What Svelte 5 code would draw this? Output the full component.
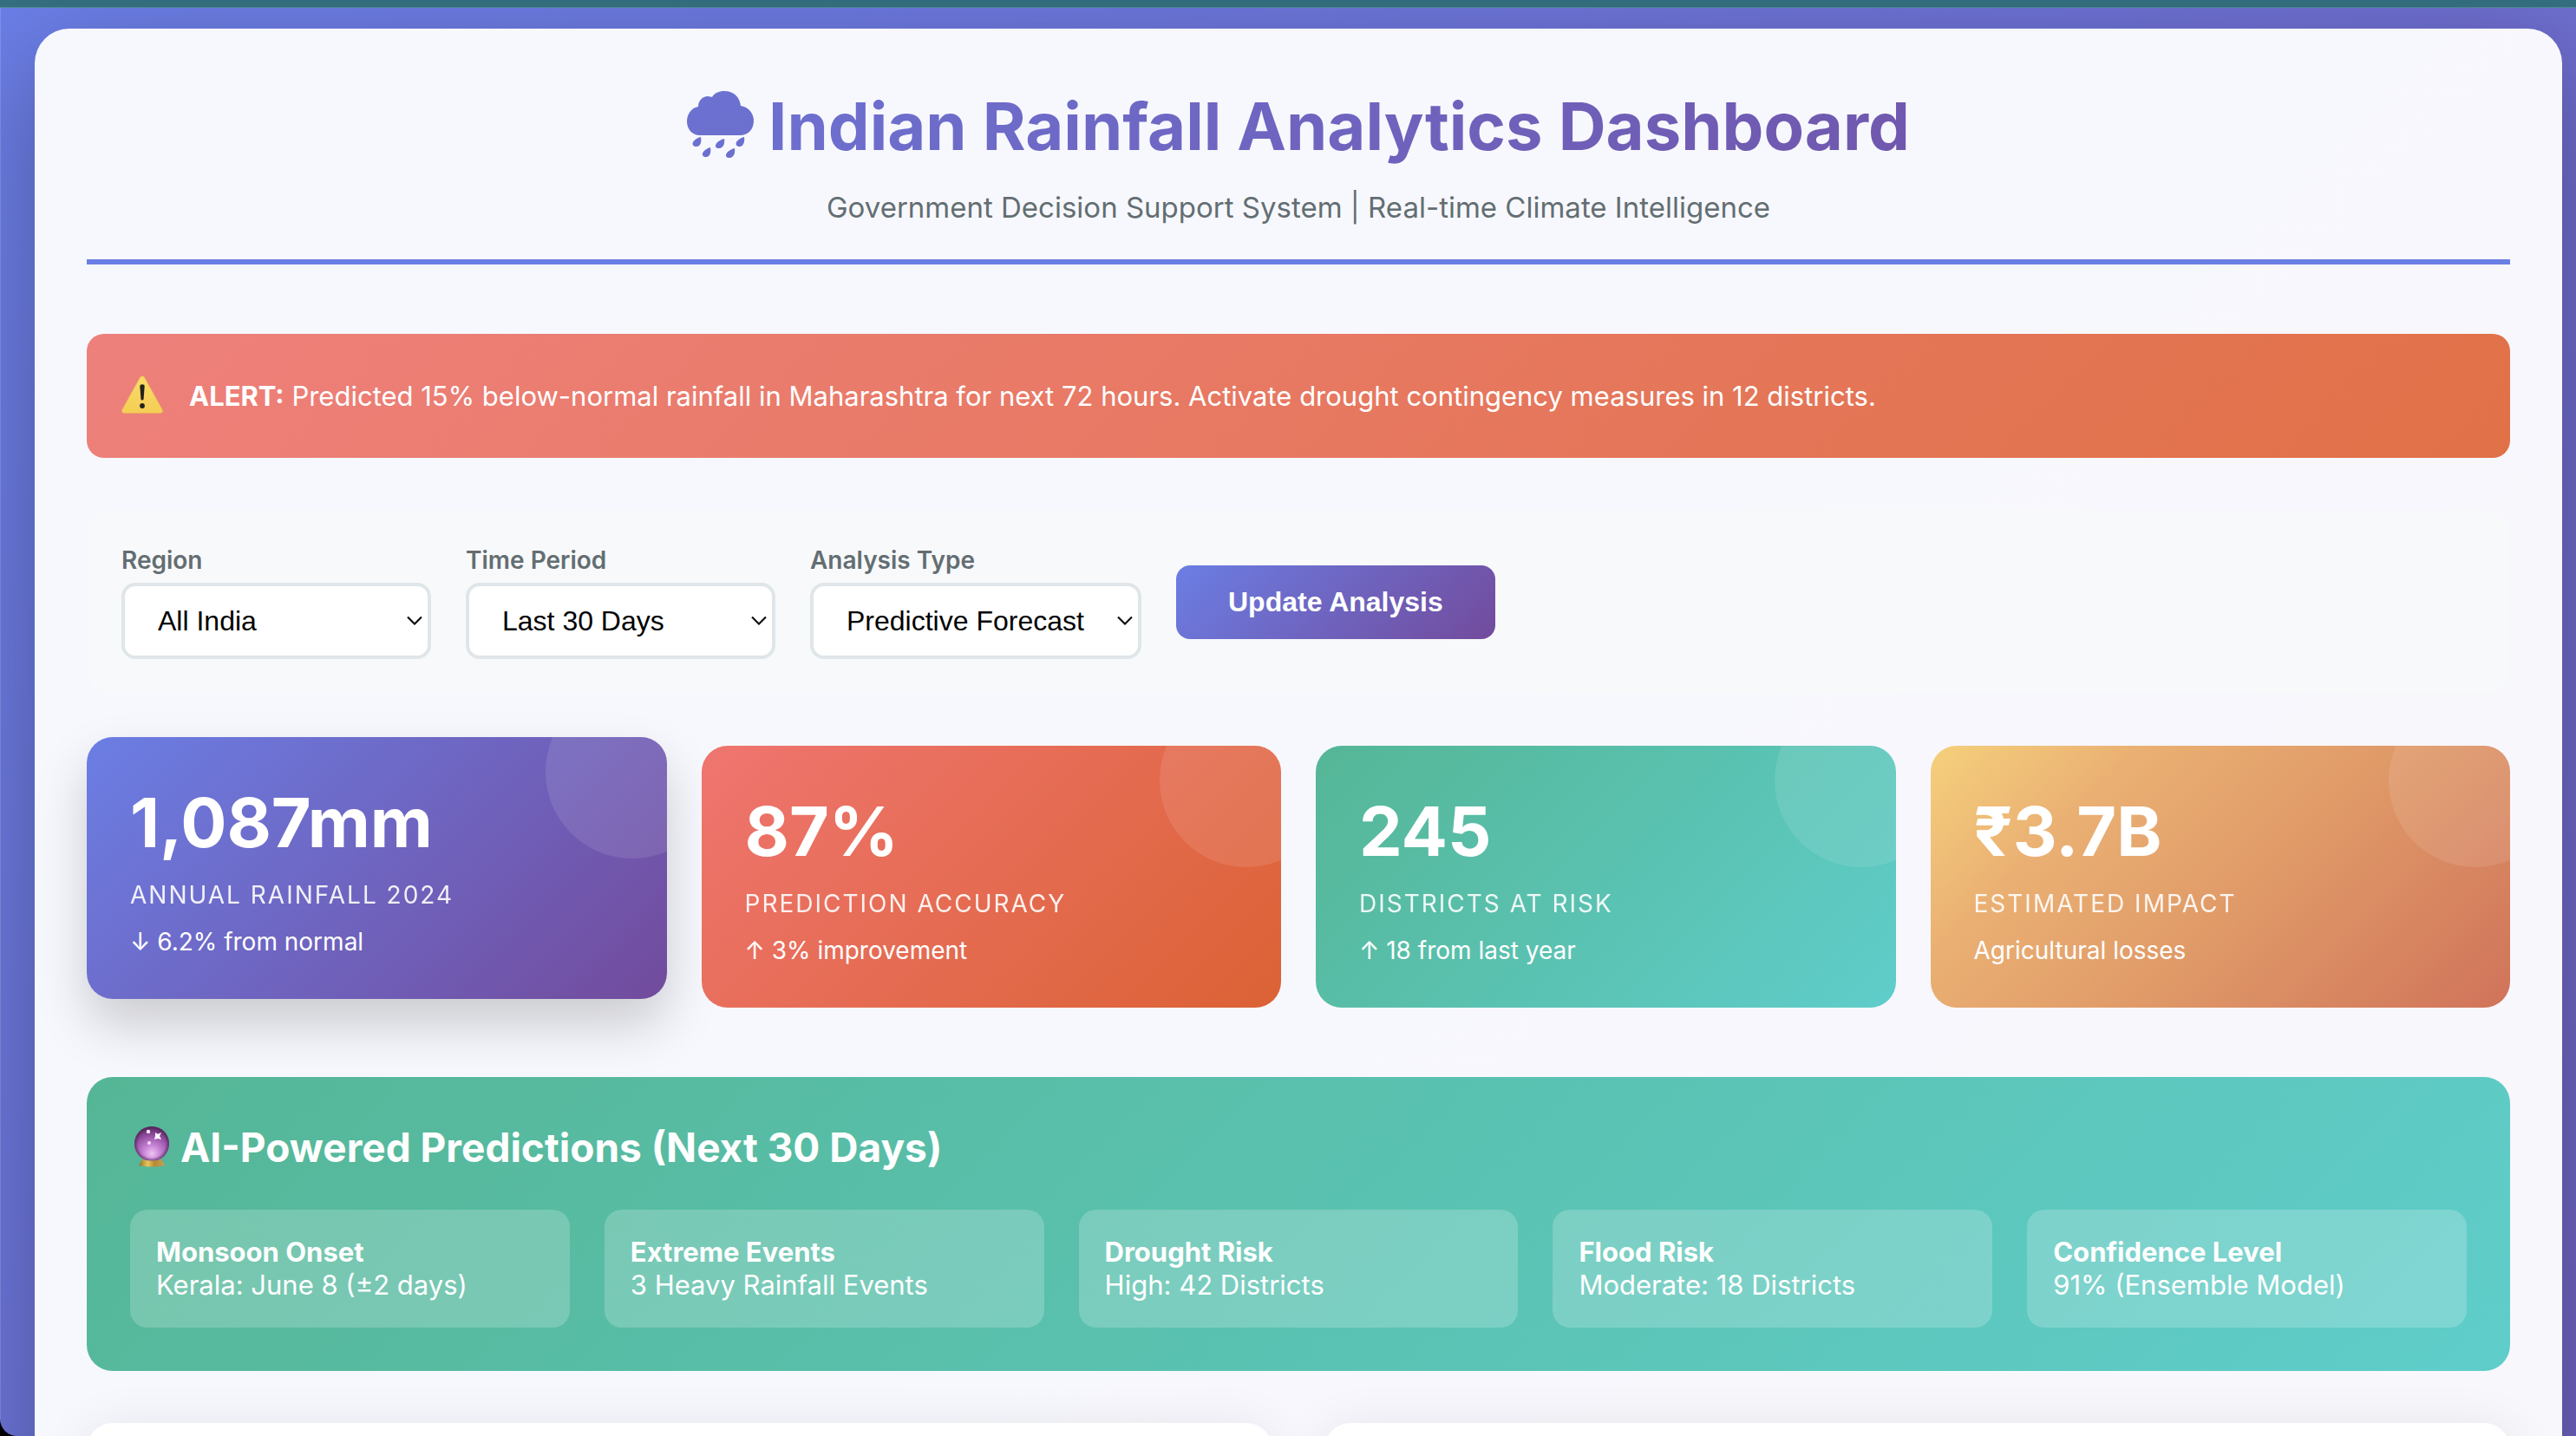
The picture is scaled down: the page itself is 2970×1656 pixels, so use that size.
<script>
  const filters = [
    { id: 'region', label: 'Region', value: 'All India', size: 'regular' },
    { id: 'period', label: 'Time Period', value: 'Last 30 Days', size: 'regular' },
    { id: 'analysis', label: 'Analysis Type', value: 'Predictive Forecast', size: 'wide' }
  ];

  const stats = [
    { tone: 'indigo', value: '1,087mm', label: 'Annual Rainfall 2024', note: '↓ 6.2% from normal', raised: true },
    { tone: 'coral', value: '87%', label: 'Prediction Accuracy', note: '↑ 3% improvement' },
    { tone: 'teal', value: '245', label: 'Districts at Risk', note: '↑ 18 from last year' },
    { tone: 'amber', value: '₹3.7B', label: 'Estimated Impact', note: 'Agricultural losses' }
  ];

  const predictions = [
    { title: 'Monsoon Onset', text: 'Kerala: June 8 (±2 days)' },
    { title: 'Extreme Events', text: '3 Heavy Rainfall Events' },
    { title: 'Drought Risk', text: 'High: 42 Districts' },
    { title: 'Flood Risk', text: 'Moderate: 18 Districts' },
    { title: 'Confidence Level', text: '91% (Ensemble Model)' }
  ];
</script>

<div class="window">
  <div class="strip"></div>
  <div class="page">
    <main class="container">
      <header class="header">
        <h1>
          <svg class="cloud" viewBox="0 0 78 80" aria-hidden="true">
            <defs>
              <linearGradient id="cloud-fill" x1="0" y1="0" x2="1" y2="1">
                <stop offset="0" stop-color="#6b72d3" />
                <stop offset="1" stop-color="#6c6fcd" />
              </linearGradient>
            </defs>
            <g fill="url(#cloud-fill)">
              <path d="M15 51C6 51 0 44 0 35C0 26 6 19 13 18C13 11 18 6 24 6C26 6 28 7 29 7C32 2 37 0 43 0C54 0 61 7 62 17C70 18 77 25 77 34C77 44 71 51 61 51Z" />
              <path d="M16 53C17 58 16 64 11 64C4 64 5 56 16 53Z" />
              <path d="M43 55C44 60 42 66 37 66C30 66 32 58 43 55Z" />
              <path d="M66 53C67 58 65 64 61 64C54 64 55 56 66 53Z" />
              <path d="M27 65C28 70 27 76 22 76C15 76 17 68 27 65Z" />
              <path d="M55 66C56 71 54 77 49 77C42 77 44 69 55 66Z" />
            </g>
          </svg>
          <span>Indian Rainfall Analytics Dashboard</span>
        </h1>
        <p>Government Decision Support System | Real-time Climate Intelligence</p>
      </header>

      <section class="alert" role="alert">
        <svg class="warning" viewBox="0 0 48 48" aria-hidden="true">
          <defs>
            <linearGradient id="warn-fill" x1="0" y1="0" x2="0" y2="1">
              <stop offset="0" stop-color="#f8dc68" />
              <stop offset="1" stop-color="#f5cd55" />
            </linearGradient>
          </defs>
          <path d="M21.500 2Q24 -1 26.500 2L47 39Q49 43.500 44.500 43.500H3.500Q-1 43.500 1 39Z" fill="url(#warn-fill)" stroke="#dfae58" stroke-width="0.600" />
          <path d="M21.300 12Q21.300 10.300 24 10.300Q26.700 10.300 26.700 12L25.600 27Q25.400 28.500 24 28.500Q22.600 28.500 22.400 27Z" fill="#22221c" />
          <circle cx="24" cy="35" r="2.900" fill="#22221c" />
        </svg>
        <p><strong>ALERT:</strong> Predicted 15% below-normal rainfall in Maharashtra for next 72 hours. Activate drought contingency measures in 12 districts.</p>
      </section>

      <form class="filters" onsubmit={(e) => e.preventDefault()}>
        {#each filters as f}
          <div class="field {f.size}">
            <label for={f.id}>{f.label}</label>
            <div class="select-wrap">
              <select id={f.id}><option>{f.value}</option></select>
              <svg class="chevron" viewBox="0 0 18 12" aria-hidden="true"><path d="M1 1.500L9 9.500L17 1.500" /></svg>
            </div>
          </div>
        {/each}
        <button type="submit">Update Analysis</button>
      </form>

      <section class="stats">
        {#each stats as s}
          <article class="stat {s.tone}" class:raised={s.raised}>
            <div class="value">{s.value}</div>
            <div class="label">{s.label}</div>
            <div class="note">{s.note}</div>
          </article>
        {/each}
      </section>

      <section class="predictions">
        <h2>
          <svg class="ball" viewBox="0 0 42 48" aria-hidden="true">
            <defs>
              <radialGradient id="ball-fill" cx="0.500" cy="0.780" r="0.800">
                <stop offset="0" stop-color="#eec3f3" />
                <stop offset="0.300" stop-color="#c884d6" />
                <stop offset="0.650" stop-color="#9450a3" />
                <stop offset="1" stop-color="#552459" />
              </radialGradient>
              <radialGradient id="ball-rim">
                <stop offset="0.780" stop-color="#4e2055" stop-opacity="0" />
                <stop offset="1" stop-color="#4e2055" stop-opacity="0.650" />
              </radialGradient>
              <linearGradient id="ball-base" x1="0" y1="0" x2="1" y2="0">
                <stop offset="0" stop-color="#94702c" />
                <stop offset="0.350" stop-color="#e9c65b" />
                <stop offset="0.600" stop-color="#b58a35" />
                <stop offset="1" stop-color="#c99f50" />
              </linearGradient>
            </defs>
            <circle cx="21" cy="20" r="20" fill="url(#ball-fill)" />
            <circle cx="21" cy="20" r="20" fill="url(#ball-rim)" />
            <path d="M10 38Q21 41 32 38L36 45Q21 48 6 45Z" fill="url(#ball-base)" />
            <rect x="15" y="4" width="4" height="4" rx="1" fill="#f5e3f7" />
            <path d="M25 7l3 2 4-2-2 4 2 4-4-1-4 1 1-4z" fill="#fff" />
            <circle cx="18" cy="19" r="2" fill="#f8dcfa" />
          </svg>
          <span>AI-Powered Predictions (Next 30 Days)</span>
        </h2>
        <div class="cards">
          {#each predictions as p}
            <div class="card"><strong>{p.title}</strong><span>{p.text}</span></div>
          {/each}
        </div>
      </section>

      <section class="charts">
        <div class="chart"></div>
        <div class="chart"></div>
      </section>
    </main>
  </div>
</div>

<style>
  :global(body) {
    margin: 0;
    background: #000;
  }

  .window,
  .window :global(*) {
    box-sizing: border-box;
  }

  .window {
    height: 100vh;
    overflow-y: auto;
    scrollbar-width: none;
    border-bottom-left-radius: 20px;
    font-family: Inter, "Liberation Sans", sans-serif;
    color: #fff;
  }

  .strip {
    height: 9px;
    background: #357080;
    border-bottom: 1px solid #4f8a94;
  }

  .page {
    padding: 24px 16px 40px 40px;
    background: linear-gradient(135deg, #6b7ee6, #724b9c) 0 0 / 100% 6000px;
    box-shadow: inset 1px 0 rgba(255, 255, 255, 0.15);
  }

  .container {
    padding: 60px;
    border-radius: 40px;
    background: rgba(255, 255, 255, 0.95);
    box-shadow: 0 40px 120px rgba(0, 0, 0, 0.3);
  }

  h1,
  h2,
  p {
    margin: 0;
  }

  .header {
    margin-bottom: 80px;
    padding-bottom: 38px;
    border-bottom: 6px solid #6b7ee4;
    text-align: center;
  }

  h1 {
    display: flex;
    justify-content: center;
    gap: 16px;
    margin-bottom: 20px;
    font-size: 76px;
    font-weight: 700;
    line-height: 104px;
    background: linear-gradient(135deg, #6b7ee4, #724b9c);
    background-clip: text;
    color: transparent;
  }

  .cloud {
    width: 78px;
    height: 80px;
    margin-top: 12px;
  }

  .header p {
    font-size: 33px;
    line-height: 44px;
    color: #636e72;
  }

  .alert {
    display: flex;
    align-items: center;
    gap: 30px;
    min-height: 143px;
    margin-bottom: 60px;
    padding: 40px;
    border-radius: 20px;
    background: linear-gradient(135deg, #ee807c, #e07147);
    font-size: 31px;
    line-height: 38px;
  }

  .warning {
    flex: none;
    width: 48px;
    height: 48px;
  }

  .filters {
    display: flex;
    flex-wrap: wrap;
    align-items: center;
    gap: 40px;
    margin-bottom: 60px;
    padding: 40px;
    border-radius: 30px;
    background: #f8f9fb;
  }

  .field {
    display: flex;
    flex-direction: column;
    gap: 8px;
    width: 357px;
  }

  .field.wide {
    width: 382px;
  }

  label {
    font-size: 28px;
    font-weight: 600;
    line-height: 36px;
    color: #636e72;
  }

  .select-wrap {
    position: relative;
  }

  select {
    appearance: none;
    display: block;
    width: 100%;
    height: 88px;
    padding: 0 38px;
    border: 4px solid #dfe6e9;
    border-radius: 16px;
    background: #fff;
    color: #000;
    font-family: "Liberation Sans", Arial, sans-serif;
    font-size: 32px;
  }

  .chevron {
    position: absolute;
    top: 38px;
    right: 10px;
    width: 18px;
    height: 12px;
    fill: none;
    stroke: #000;
    stroke-width: 2;
    pointer-events: none;
  }

  button {
    height: 85px;
    padding: 0 60px;
    border: 0;
    border-radius: 16px;
    background: linear-gradient(135deg, #6b7ee4, #724b9c);
    color: #fff;
    font-family: "Liberation Sans", Arial, sans-serif;
    font-size: 32px;
    font-weight: 700;
  }

  .stats {
    display: grid;
    grid-template-columns: repeat(4, 1fr);
    gap: 40px;
    margin-bottom: 80px;
  }

  .stat {
    position: relative;
    overflow: hidden;
    padding: 50px 50px 48px;
    border-radius: 30px;
  }

  .stat::before {
    content: "";
    position: absolute;
    top: -60px;
    right: -60px;
    width: 200px;
    height: 200px;
    border-radius: 50%;
    background: rgba(255, 255, 255, 0.1);
  }

  .stat.raised {
    transform: translateY(-10px);
    box-shadow: 0 30px 60px rgba(0, 0, 0, 0.18);
  }

  .indigo { background: linear-gradient(135deg, #6b7ee4, #724b9c); }
  .coral { background: linear-gradient(135deg, #ef7570, #db6234); }
  .teal { background: linear-gradient(135deg, #55b696, #5fcdca); }
  .amber { background: linear-gradient(135deg, #f5d07c, #eab073 25%, #e09a68 55%, #d0735a); }

  .value {
    margin-bottom: 18px;
    font-size: 79px;
    font-weight: 700;
    line-height: 96px;
  }

  .label {
    margin-bottom: 18px;
    font-size: 28px;
    line-height: 36px;
    letter-spacing: 2px;
    text-transform: uppercase;
    opacity: 0.9;
  }

  .note {
    font-size: 28px;
    line-height: 36px;
  }

  .predictions {
    margin-bottom: 60px;
    padding: 50px;
    border-radius: 30px;
    background: linear-gradient(135deg, #55b696, #5fcdca);
  }

  h2 {
    display: flex;
    align-items: center;
    gap: 12px;
    margin-bottom: 41px;
    padding-left: 4px;
    font-size: 46px;
    font-weight: 700;
    line-height: 62px;
  }

  .ball {
    width: 42px;
    height: 48px;
  }

  .cards {
    display: grid;
    grid-template-columns: repeat(5, 1fr);
    gap: 40px;
  }

  .card {
    display: flex;
    flex-direction: column;
    padding: 30px;
    border-radius: 20px;
    background: rgba(255, 255, 255, 0.2);
    font-size: 31px;
    line-height: 38px;
  }

  .charts {
    display: grid;
    grid-template-columns: repeat(2, 1fr);
    gap: 60px;
  }

  .chart {
    min-height: 400px;
    border-radius: 30px;
    background: #fff;
    box-shadow: 0 10px 60px rgba(0, 0, 0, 0.1);
  }
</style>
